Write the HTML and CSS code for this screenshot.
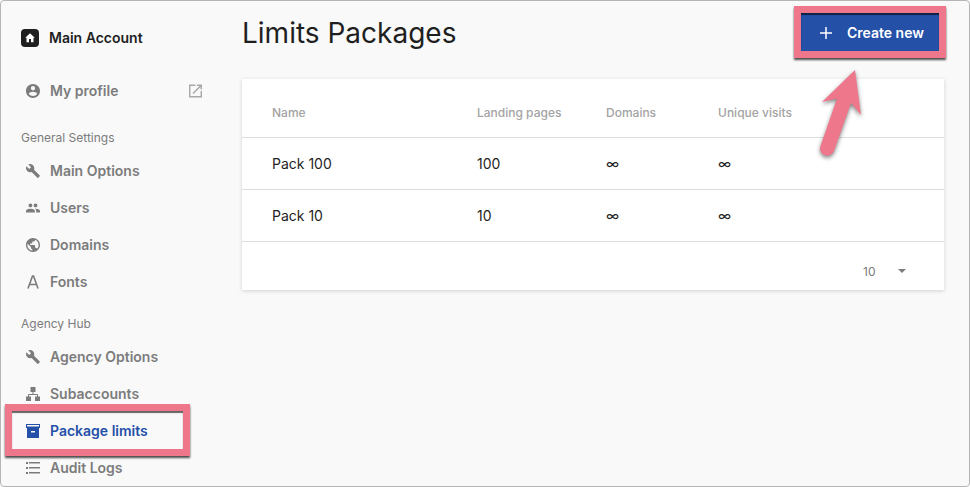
FILE: index.html
```html
<!DOCTYPE html>
<html lang="en">
<head>
  <meta charset="UTF-8" />
  <meta name="viewport" content="width=device-width, initial-scale=1.0"/>
  <title>Limits Packages</title>
  <link rel="stylesheet" href="styles.css">
</head>
<body>

  <div class="app">
    <aside class="sidebar">
      <a class="account" href="#">
        <svg class="account-icon" viewBox="0 0 18 18"><rect width="18" height="18" rx="4" fill="#1f1f1f"/><path d="M9 4.300 4.200 8.700h1.300v4.500h2.500v-3.200h2v3.200h2.500V8.700h1.300z" fill="#fff"/></svg>
        Main Account
      </a>

      <nav>
        <a class="nav-item profile" href="#">
          <svg class="icon" viewBox="2 2 20 20"><path d="M12 2C6.480 2 2 6.480 2 12s4.480 10 10 10 10-4.480 10-10S17.520 2 12 2zm0 3c1.660 0 3 1.340 3 3s-1.340 3-3 3-3-1.340-3-3 1.340-3 3-3zm0 14.200c-2.500 0-4.710-1.280-6-3.220.030-1.990 4-3.080 6-3.080 1.990 0 5.970 1.090 6 3.080-1.290 1.940-3.500 3.220-6 3.220z"/></svg>
          My profile
          <svg class="icon external" viewBox="3 3 18 18"><path d="M19 19H5V5h7V3H3v18h18v-9h-2v7zM14 3v2h3.590l-9.830 9.830 1.410 1.410L19 6.410V10h2V3h-7z"/></svg>
        </a>

        <h2 class="nav-title">General Settings</h2>
        <a class="nav-item" href="#">
          <svg class="icon" viewBox="1 1 22 22"><path d="M22.700 19l-9.100-9.100c.9-2.300.4-5-1.500-6.900-2-2-5-2.400-7.400-1.300L9 6 6 9 1.600 4.700C.4 7.100.9 10.100 2.900 12.100c1.900 1.900 4.600 2.400 6.900 1.500l9.100 9.100c.4.4 1 .4 1.400 0l2.300-2.300c.5-.4.5-1.100.1-1.400z"/></svg>
          Main Options
        </a>
        <a class="nav-item" href="#">
          <svg class="icon" viewBox="1 1 22 22"><path d="M16 11c1.660 0 2.990-1.340 2.990-3S17.660 5 16 5s-3 1.340-3 3 1.340 3 3 3zm-8 0c1.660 0 2.990-1.340 2.990-3S9.660 5 8 5 5 6.340 5 8s1.340 3 3 3zm0 2c-2.330 0-7 1.170-7 3.500V19h14v-2.500c0-2.330-4.670-3.500-7-3.500zm8 0c-.29 0-.62.020-.97.050 1.160.84 1.970 1.970 1.970 3.450V19h6v-2.500c0-2.330-4.670-3.500-7-3.500z"/></svg>
          Users
        </a>
        <a class="nav-item" href="#">
          <svg class="icon" viewBox="2 2 20 20"><path d="M12 2C6.480 2 2 6.480 2 12s4.480 10 10 10 10-4.480 10-10S17.520 2 12 2zm-1 17.930c-3.950-.49-7-3.850-7-7.930 0-.62.080-1.210.21-1.790L9 15v1c0 1.100.9 2 2 2v1.930zm6.900-2.540c-.26-.81-1-1.390-1.900-1.390h-1v-3c0-.55-.45-1-1-1H8v-2h2c.55 0 1-.45 1-1V7h2c1.100 0 2-.9 2-2v-.41c2.930 1.190 5 4.060 5 7.410 0 2.080-.8 3.970-2.100 5.390z"/></svg>
          Domains
        </a>
        <a class="nav-item" href="#">
          <svg class="icon" viewBox="0 0 14 14"><path d="M2 13.500 6.500 1h1L12 13.500M3.700 9.500h6.600" fill="none" stroke="currentColor" stroke-width="1.600"/></svg>
          Fonts
        </a>

        <h2 class="nav-title">Agency Hub</h2>
        <a class="nav-item" href="#">
          <svg class="icon" viewBox="1 1 22 22"><path d="M22.700 19l-9.100-9.100c.9-2.300.4-5-1.500-6.900-2-2-5-2.400-7.400-1.300L9 6 6 9 1.600 4.700C.4 7.100.9 10.100 2.900 12.100c1.900 1.900 4.600 2.400 6.900 1.500l9.100 9.100c.4.4 1 .4 1.400 0l2.300-2.300c.5-.4.5-1.100.1-1.400z"/></svg>
          Agency Options
        </a>
        <a class="nav-item" href="#">
          <svg class="icon" viewBox="0 0 14 14"><path d="M4.500 0h5v5h-5zM0 9.500h5V14H0zM9 9.500h5V14H9z"/><path d="M7 4v3.500M2.500 10V7.500h9V10" fill="none" stroke="currentColor"/></svg>
          Subaccounts
        </a>
        <a class="nav-item active" href="#" aria-current="page">
          <svg class="icon" viewBox="0 0 14 14"><path d="M0 0h14v4H0zM1 4h12v10H1zM5 7v1.500h4V7zM1 1v1.500h12V1z" fill-rule="evenodd"/></svg>
          Package limits
          <span class="marker marker-nav"></span>
        </a>
        <a class="nav-item" href="#">
          <svg class="icon" viewBox="0 0 14 14"><path d="M0 1h2v2H0zM0 6h2v2H0zM0 11h2v2H0zM3 1h11v1.500H3zM3 6h11v1.500H3zM3 11h11v1.500H3z"/></svg>
          Audit Logs
        </a>
      </nav>
    </aside>

    <main class="content">
      <header class="page-header">
        <h1>Limits Packages</h1>
        <div class="action">
          <button class="create" type="button">
            <svg class="plus" viewBox="0 0 12 12"><path d="M6 0v12M0 6h12" stroke="currentColor" stroke-width="1.500"/></svg>
            Create new
          </button>
          <span class="marker marker-button"></span>
          <svg class="arrow" viewBox="0 0 48 96"><path d="M39 4 6 36l15-3.500L4.500 80a7 7 0 0 0 13.500 5L35 37l10 12z"/></svg>
        </div>
      </header>

      <section class="card">
        <table>
          <thead>
            <tr>
              <th class="col-name">Name</th>
              <th class="col-pages">Landing pages</th>
              <th class="col-domains">Domains</th>
              <th>Unique visits</th>
            </tr>
          </thead>
          <tbody>
            <tr>
              <td>Pack 100</td>
              <td>100</td>
              <td>∞</td>
              <td>∞</td>
            </tr>
            <tr>
              <td>Pack 10</td>
              <td>10</td>
              <td>∞</td>
              <td>∞</td>
            </tr>
          </tbody>
        </table>
        <div class="card-footer">
          <div class="page-size">
            <select aria-label="Rows per page">
              <option>10</option>
              <option>25</option>
              <option>50</option>
            </select>
            <svg class="caret" viewBox="0 0 8 4"><path d="M0 0h8L4 4z"/></svg>
          </div>
        </div>
      </section>
    </main>
  </div>

</body>
</html>
```
FILE: styles.css
```css
* {
  box-sizing: border-box;
}

body {
  margin: 0;
  font-family: Inter, 'Liberation Sans', sans-serif;
  font-size: 14px;
  color: #1f1f1f;
  background: #fff;
}

a {
  color: inherit;
  text-decoration: none;
}

.app {
  display: flex;
  min-height: 100vh;
  background: #f9f9f9;
  border: 1px solid #b5b5b5;
  border-radius: 4px;
}

.sidebar {
  flex: 0 0 241px;
  padding: 24px 40px 0 20px;
}

.account {
  display: flex;
  align-items: center;
  gap: 10px;
  height: 26px;
  font-weight: 600;
  line-height: 16px;
}

.account-icon {
  width: 18px;
  height: 18px;
}

nav {
  display: flex;
  flex-direction: column;
  gap: 1px;
  padding-top: 22px;
}

.nav-item {
  position: relative;
  display: flex;
  align-items: center;
  gap: 10px;
  height: 36px;
  padding-left: 5px;
  font-weight: 600;
  line-height: 16px;
  color: #7c7c7c;
}

.nav-item.profile {
  margin-bottom: 5px;
}

.nav-item.active {
  color: #2450a8;
}

.icon {
  width: 14px;
  height: 14px;
  fill: currentColor;
}

.external {
  width: 13px;
  margin-left: auto;
  color: #a8a8a8;
}

.nav-title {
  margin: 13px 0 4px;
  font-size: 12px;
  font-weight: 400;
  line-height: 20px;
  color: #7c7c7c;
}

.content {
  flex: 1;
  min-width: 0;
  padding: 12px 25px 24px 0;
}

.page-header {
  display: flex;
  justify-content: space-between;
  align-items: flex-start;
  padding-bottom: 26px;
}

h1 {
  margin: 0;
  font-size: 28px;
  font-weight: 400;
  line-height: 40px;
}

.action {
  position: relative;
}

.create {
  display: flex;
  align-items: center;
  gap: 15px;
  height: 40px;
  padding: 0 20px;
  border: none;
  background: #2450a8;
  color: #fff;
  font: inherit;
  font-weight: 600;
  line-height: 16px;
  cursor: pointer;
}

.plus {
  width: 12px;
  height: 12px;
}

/* callouts drawn over the page */
.marker {
  position: absolute;
  border: 7px solid #ee778b;
  box-shadow: 0 2px 2px rgba(0, 0, 0, 0.7), inset 0 2px 1px rgba(0, 0, 0, 0.6);
  pointer-events: none;
}

.marker-nav {
  top: -9px;
  bottom: -7px;
  left: -16px;
  right: 12px;
  z-index: 1;
}

.marker-button {
  top: -7px;
  bottom: -5px;
  left: -6px;
  right: -2px;
}

.arrow {
  position: absolute;
  top: 53px;
  right: 80px;
  width: 48px;
  height: 96px;
  fill: #ee778b;
  filter: drop-shadow(0 2px 2px rgba(0, 0, 0, 0.5));
  pointer-events: none;
}

.card {
  background: #fff;
  box-shadow: 0 1px 4px rgba(0, 0, 0, 0.16);
}

table {
  width: 100%;
  border-collapse: separate;
  border-spacing: 0;
  table-layout: fixed;
}

th,
td {
  padding: 0;
  text-align: left;
  border-bottom: 1px solid #dcdcdc;
}

th {
  height: 59px;
  padding-top: 8px;
  font-size: 12px;
  font-weight: 500;
  color: #a3a3a3;
}

td {
  height: 52px;
}

th:first-child,
td:first-child {
  padding-left: 30px;
}

.col-name {
  width: 235px;
}

.col-pages {
  width: 129px;
}

.col-domains {
  width: 112px;
}

.card-footer {
  display: flex;
  justify-content: flex-end;
  padding: 18px 38px 8px 0;
}

.page-size {
  display: grid;
  align-items: center;
  color: #7c7c7c;
}

.page-size select,
.caret {
  grid-area: 1 / 1;
}

.page-size select {
  width: 43px;
  height: 22px;
  padding: 0;
  appearance: none;
  border: none;
  background: none;
  color: inherit;
  font: inherit;
  font-size: 12px;
}

.caret {
  justify-self: end;
  width: 8px;
  height: 4px;
  fill: currentColor;
  pointer-events: none;
}
```
